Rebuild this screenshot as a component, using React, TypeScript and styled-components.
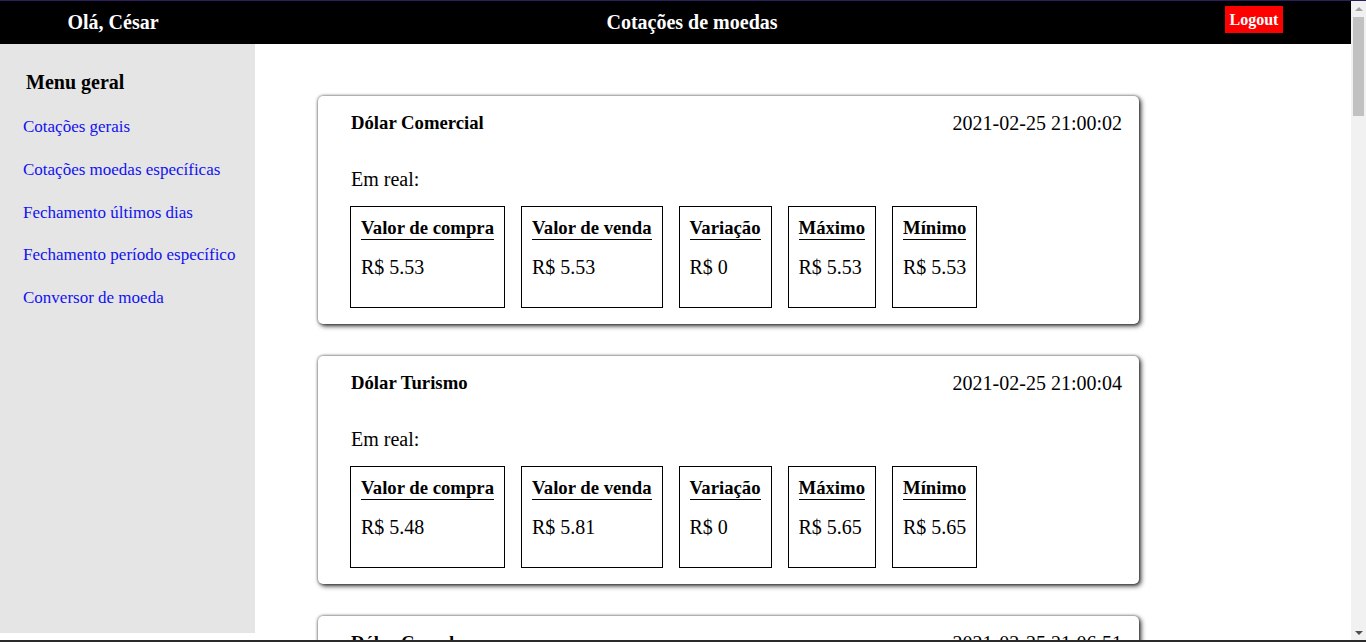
import React from "react";
import styled, { createGlobalStyle } from "styled-components";

const GlobalStyle = createGlobalStyle`
  html, body {
    margin: 0;
    padding: 0;
    background: #ffffff;
    font-family: "Liberation Serif", "Times New Roman", serif;
    color: #000000;
    overflow: hidden;
  }
  * { box-sizing: border-box; }
`;

const Frame = styled.div`
  height: 100vh;
  border-top: 1px solid #2e1e60;
  border-bottom: 2px solid #2a2a2a;
  display: flex;
`;

const Scroller = styled.div`
  flex: 1;
  min-width: 0;
  overflow-y: auto;
  scrollbar-width: none;
  &::-webkit-scrollbar {
    display: none;
  }
`;

const ScrollBar = styled.div`
  flex: 0 0 15px;
  display: flex;
  flex-direction: column;
  background: #f1f1f1;
`;

const ScrollArrow = styled.div<{ $dir: "up" | "down" }>`
  flex: 0 0 15px;
  display: flex;
  align-items: center;
  justify-content: center;
  &::before {
    content: "";
    width: 0;
    height: 0;
    border-left: 4px solid transparent;
    border-right: 4px solid transparent;
    ${(p) =>
      p.$dir === "up"
        ? "border-bottom: 4px solid #a3a3a3;"
        : "border-top: 4px solid #505050;"}
  }
`;

const ScrollTrack = styled.div`
  flex: 1;
  padding: 1px 2px 0;
`;

const ScrollThumb = styled.div`
  height: 99px;
  background: #c1c1c1;
`;

const Header = styled.header`
  display: grid;
  grid-template-columns: 226px 932px 1fr;
  align-items: center;
  height: 43px;
  background: #000000;
  color: #ffffff;
`;

const HeaderText = styled.h1`
  margin: 0;
  font-size: 20px;
  font-weight: bold;
  line-height: 23px;
  text-align: center;
`;

const LogoutCell = styled.div`
  display: flex;
  padding-left: 67px;
  align-self: start;
  padding-top: 5px;
`;

const LogoutButton = styled.button`
  width: 58px;
  height: 27px;
  padding: 0;
  border: none;
  background: #ff0000;
  color: #ffffff;
  font-family: "Liberation Serif", "Times New Roman", serif;
  font-weight: bold;
  font-size: 16px;
  line-height: 27px;
  cursor: pointer;
`;

const Body = styled.div`
  display: flex;
  align-items: flex-start;
`;

const Sidebar = styled.nav`
  flex: 0 0 255px;
  height: 589px;
  background: #e5e5e5;
  padding: 27px 0 0 23px;
  display: flex;
  flex-direction: column;
`;

const MenuTitle = styled.h2`
  margin: 0 0 23px 3px;
  font-size: 20px;
  font-weight: bold;
  line-height: 23px;
`;

const MenuList = styled.div`
  display: flex;
  flex-direction: column;
  gap: 22.75px;
`;

const MenuLink = styled.a`
  display: block;
  font-size: 17px;
  line-height: 20px;
  color: #1212f0;
  text-decoration: none;
`;

const Content = styled.main`
  flex: 1;
  padding: 52px 0 40px 63px;
  display: flex;
  flex-direction: column;
  gap: 32px;
`;

const Card = styled.section`
  width: 821px;
  background: #ffffff;
  border-radius: 5px;
  box-shadow: 2px 2px 5px rgba(0, 0, 0, 0.8), 0 0 3px rgba(0, 0, 0, 0.6);
  padding: 16px 17px 16px 32px;
`;

const CardHeader = styled.div`
  display: flex;
  justify-content: space-between;
  align-items: center;
  height: 23px;
`;

const CardTitle = styled.h3`
  margin: 0 0 1px 1px;
  font-size: 18.72px;
  font-weight: bold;
  line-height: 22px;
`;

const CardDate = styled.span`
  font-size: 20px;
  line-height: 23px;
`;

const Label = styled.p`
  margin: 32.5px 0 15.5px 1px;
  font-size: 20px;
  line-height: 23px;
`;

const Boxes = styled.div`
  display: flex;
  gap: 16px;
`;

const Box = styled.div`
  height: 102px;
  border: 1px solid #000000;
  padding: 10px 10px 0 10px;
  display: flex;
  flex-direction: column;
  align-items: flex-start;
`;

const BoxTitle = styled.h4`
  margin: 0;
  font-size: 18.72px;
  font-weight: bold;
  line-height: 22px;
  border-bottom: 1px solid #000000;
  white-space: nowrap;
`;

const BoxValue = styled.span`
  margin-top: 15.5px;
  font-size: 20px;
  line-height: 23px;
  white-space: nowrap;
`;

type Quote = {
  name: string;
  date: string;
  buy: string;
  sell: string;
  variation: string;
  high: string;
  low: string;
};

const quotes: Quote[] = [
  { name: "Dólar Comercial", date: "2021-02-25 21:00:02", buy: "5.53", sell: "5.53", variation: "0", high: "5.53", low: "5.53" },
  { name: "Dólar Turismo", date: "2021-02-25 21:00:04", buy: "5.48", sell: "5.81", variation: "0", high: "5.65", low: "5.65" },
  { name: "Dólar Canadense", date: "2021-02-25 21:06:51", buy: "4.38", sell: "4.38", variation: "-0.02", high: "4.41", low: "4.36" },
  { name: "Euro", date: "2021-02-25 21:06:50", buy: "6.73", sell: "6.74", variation: "-0.12", high: "6.76", low: "6.71" },
  { name: "Libra Esterlina", date: "2021-02-25 21:06:51", buy: "7.74", sell: "7.75", variation: "-0.35", high: "7.82", low: "7.71" },
  { name: "Peso Argentino", date: "2021-02-25 21:06:38", buy: "0.06", sell: "0.06", variation: "0", high: "0.06", low: "0.06" },
  { name: "Iene Japonês", date: "2021-02-25 21:06:48", buy: "0.05", sell: "0.05", variation: "-0.39", high: "0.05", low: "0.05" },
  { name: "Franco Suíço", date: "2021-02-25 21:06:48", buy: "6.09", sell: "6.1", variation: "-0.43", high: "6.13", low: "6.07" },
  { name: "Dólar Australiano", date: "2021-02-25 21:06:50", buy: "4.33", sell: "4.33", variation: "-0.28", high: "4.37", low: "4.31" },
  { name: "Yuan Chinês", date: "2021-02-25 21:06:08", buy: "0.85", sell: "0.85", variation: "0.01", high: "0.85", low: "0.85" },
  { name: "Novo Shekel Israelense", date: "2021-02-25 19:46:17", buy: "1.68", sell: "1.68", variation: "0", high: "1.68", low: "1.68" },
  { name: "Bitcoin", date: "2021-02-25 21:07:07", buy: "266.612", sell: "266.612", variation: "-4.02", high: "290.000", low: "261.000" },
  { name: "Litecoin", date: "2021-02-25 21:06:53", buy: "937.17", sell: "937.57", variation: "-5.43", high: "1013.01", low: "919.98" },
  { name: "Ethereum", date: "2021-02-25 21:06:43", buy: "8.553", sell: "8.596", variation: "-5.78", high: "9.493", low: "8.411" },
  { name: "XRP", date: "2021-02-25 21:06:56", buy: "2.49", sell: "2.49", variation: "-4.65", high: "2.73", low: "2.43" },
];

const menu = [
  "Cotações gerais",
  "Cotações moedas específicas",
  "Fechamento últimos dias",
  "Fechamento período específico",
  "Conversor de moeda",
];

function QuoteCard({ q }: { q: Quote }) {
  const cells: [string, string][] = [
    ["Valor de compra", q.buy],
    ["Valor de venda", q.sell],
    ["Variação", q.variation],
    ["Máximo", q.high],
    ["Mínimo", q.low],
  ];
  return (
    <Card>
      <CardHeader>
        <CardTitle>{q.name}</CardTitle>
        <CardDate>{q.date}</CardDate>
      </CardHeader>
      <Label>Em real:</Label>
      <Boxes>
        {cells.map(([title, value]) => (
          <Box key={title}>
            <BoxTitle>{title}</BoxTitle>
            <BoxValue>R$ {value}</BoxValue>
          </Box>
        ))}
      </Boxes>
    </Card>
  );
}

export default function App() {
  return (
    <>
      <GlobalStyle />
      <Frame>
        <Scroller>
          <Header>
            <HeaderText>Olá, César</HeaderText>
            <HeaderText>Cotações de moedas</HeaderText>
            <LogoutCell>
              <LogoutButton>Logout</LogoutButton>
            </LogoutCell>
          </Header>
          <Body>
            <Sidebar>
              <MenuTitle>Menu geral</MenuTitle>
              <MenuList>
                {menu.map((m) => (
                  <MenuLink key={m} href="#">
                    {m}
                  </MenuLink>
                ))}
              </MenuList>
            </Sidebar>
            <Content>
              {quotes.map((q) => (
                <QuoteCard key={q.name} q={q} />
              ))}
            </Content>
          </Body>
        </Scroller>
        <ScrollBar aria-hidden="true">
          <ScrollArrow $dir="up" />
          <ScrollTrack>
            <ScrollThumb />
          </ScrollTrack>
          <ScrollArrow $dir="down" />
        </ScrollBar>
      </Frame>
    </>
  );
}
